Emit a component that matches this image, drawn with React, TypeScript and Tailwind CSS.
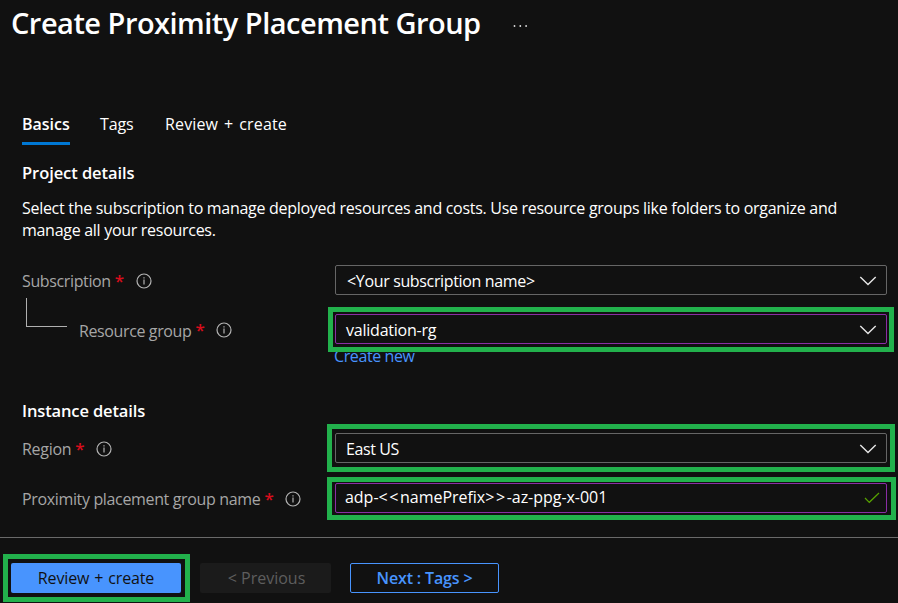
import type { ReactNode } from "react";

function InfoIcon() {
  return (
    <svg width="16" height="16" viewBox="0 0 16 16" fill="none" stroke="#b4b4b4" className="shrink-0">
      <circle cx="8" cy="8" r="7" strokeWidth="1.2" />
      <path d="M8 6.6V11.6" strokeWidth="1.2" />
      <path d="M8 4.3V5.5" strokeWidth="1.2" />
    </svg>
  );
}

function Chevron() {
  return (
    <svg width="18" height="10" viewBox="0 0 18 10" fill="none" className="mt-[2px] shrink-0">
      <path d="M1.3 1L9 8.6L16.7 1" stroke="#e6e6e6" strokeWidth="1.4" />
    </svg>
  );
}

function Check() {
  return (
    <svg width="16" height="12" viewBox="0 0 16 12" fill="none" className="shrink-0">
      <path d="M1 6L5.3 10.3L15 1" stroke="#57a300" strokeWidth="1.2" />
    </svg>
  );
}

function Row({
  label,
  labelClass,
  starClass = "ml-[4px]",
  className = "",
  children,
}: {
  label: string;
  labelClass: string;
  starClass?: string;
  className?: string;
  children: ReactNode;
}) {
  return (
    <div className={`flex h-[30px] ${className}`}>
      <div className="flex h-8 w-[313px] shrink-0 items-center text-[#a6a6a6]">
        <span className={`whitespace-nowrap ${labelClass}`}>{label}</span>
        <span className={`w-[9px] text-[17px] font-semibold text-[#d80d1c] ${starClass}`}>*</span>
        <span className="ml-[12px]">
          <InfoIcon />
        </span>
      </div>
      {children}
    </div>
  );
}

function Field({
  value,
  className,
  textClass,
  icon,
  highlight,
}: {
  value: ReactNode;
  className: string;
  textClass: string;
  icon: ReactNode;
  highlight?: string;
}) {
  return (
    <div className={`relative flex h-[30px] w-[552px] items-center justify-between rounded-[2px] border text-white ${className}`}>
      <span className={`whitespace-nowrap ${textClass}`}>{value}</span>
      {icon}
      {highlight && <div className={`absolute border-[5px] border-[#22b14c] ${highlight}`} />}
    </div>
  );
}

export default function App() {
  return (
    <div className="flex h-[603px] w-[898px] flex-col overflow-hidden bg-[#111111] font-['Open_Sans','Noto_Sans',sans-serif] text-[16px] leading-[22px] text-white">
      <header className="flex h-[48px] items-center pb-[2px] pl-[11px]">
        <h1 className="whitespace-nowrap text-[29px] font-semibold leading-[40px] tracking-[-0.51px]">
          Create Proximity Placement Group
        </h1>
        <svg width="16" height="4" viewBox="0 0 16 4" className="ml-[32px] mt-[5px]" fill="#e0e0e0">
          <circle cx="1.5" cy="2" r="0.9" />
          <circle cx="7.3" cy="2" r="0.9" />
          <circle cx="13.1" cy="2" r="0.9" />
        </svg>
      </header>

      <nav className="mt-[65px] flex h-[32px] gap-[30px] pl-[22px]">
        <span className="w-[48px] whitespace-nowrap border-b-[3px] border-[#0078d4] font-semibold tracking-[0px]">Basics</span>
        <span className="w-[35px] whitespace-nowrap tracking-[-0.1px]">Tags</span>
        <span className="whitespace-nowrap tracking-[0.15px] [word-spacing:1.6px]">Review + create</span>
      </nav>

      <main className="flex h-[392px] shrink-0 flex-col pl-[22px]">
        <h2 className="mt-[17px] text-[16.5px] font-semibold tracking-[-0.07px]">Project details</h2>
        <p className="mt-[13px] whitespace-nowrap tracking-[-0.29px]">
          Select the subscription to manage deployed resources and costs. Use resource groups like folders to organize and
          <br />
          manage all your resources.
        </p>

        <Row label="Subscription" labelClass="tracking-[-0.37px]" className="mt-[24px]">
          <Field
            value="<Your subscription name>"
            className="border-[#666666] pl-[11px] pr-[9px]"
            textClass="mt-[1px] tracking-[-0.35px]"
            icon={<Chevron />}
          />
        </Row>

        <div className="relative mt-[19px]">
          <div className="absolute -top-[16px] left-[4px] h-[29px] w-[41px] border-b border-l border-[#b0b0b0]" />
          <Row label="Resource group" labelClass="mt-[1px] pl-[57px] tracking-[-0.38px]">
            <Field
              value="validation-rg"
              className="z-10 border-[#8a2da5] pl-[10px] pr-[9px]"
              textClass="mt-[2px] tracking-[-0.22px]"
              icon={<Chevron />}
              highlight="-left-[8px] -right-[8px] -top-[8px] h-[45px]"
            />
          </Row>
        </div>
        <a className="ml-[312px] mt-[1px] whitespace-nowrap tracking-[-0.4px] text-[#4894fe]">Create new</a>

        <h2 className="mt-[33px] text-[16.5px] font-semibold tracking-[-0.13px]">Instance details</h2>
        <Row label="Region" labelClass="tracking-[-0.3px]" className="mt-[11px]">
          <Field
            value="East US"
            className="border-[#666666] pl-[10px] pr-[9px]"
            textClass="mt-[2px] tracking-[-0.4px]"
            icon={<Chevron />}
            highlight="-left-[9px] -right-[9px] -top-[10px] h-[48px]"
          />
        </Row>
        <Row label="Proximity placement group name" labelClass="tracking-[-0.35px]" className="mt-[20px]">
          <Field
            value={
              <>
                adp-<span className="tracking-[1.6px]">&lt;&lt;</span>namePrefix
                <span className="tracking-[1.6px]">&gt;&gt;</span>-az-ppg-x-001
              </>
            }
            className="border-[#8a2da5] pl-[9px] pr-[6px]"
            textClass="-mt-[2px] tracking-[-0.03px]"
            icon={<Check />}
            highlight="-left-[9px] -right-[10px] -top-[7px] h-[43px]"
          />
        </Row>
      </main>

      <footer className="flex h-[66px] shrink-0 border-t border-[#6a6a6a] pt-[25px]">
        <button className="relative ml-[11px] h-[30px] w-[170px] rounded-[2px] bg-[#4894fe] font-medium text-[#111111]">
          <span className="tracking-[-0.15px] [word-spacing:1px]">Review + create</span>
          <span className="absolute -left-[8px] -top-[9px] h-[48px] w-[187px] border-[5px] border-[#22b14c]" />
        </button>
        <button className="ml-[19px] h-[30px] w-[131px] rounded-[2px] bg-[#1b1b1b] pl-[2px] font-medium text-[#5e5e5e]">
          <span>&lt; Previous</span>
        </button>
        <button className="ml-[19px] h-[30px] w-[149px] rounded-[2px] border border-[#4894fe] font-semibold text-[#4894fe]">
          <span className="tracking-[-0.15px]">Next : Tags &gt;</span>
        </button>
      </footer>
    </div>
  );
}
